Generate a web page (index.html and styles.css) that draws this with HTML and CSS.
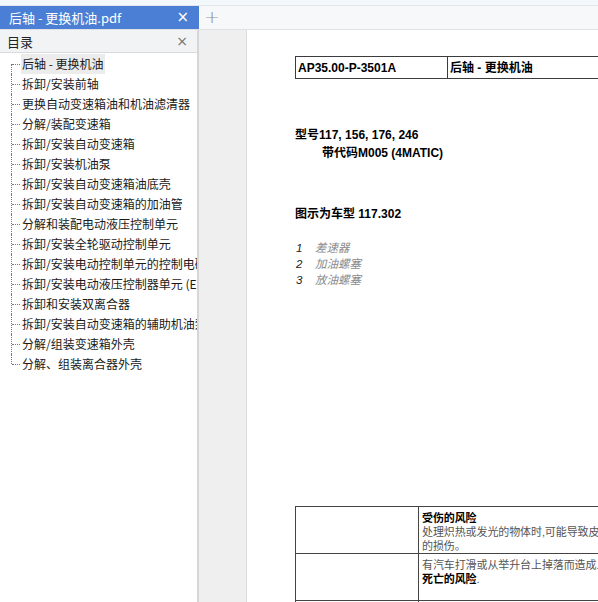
FILE: index.html
```html
<!DOCTYPE html>
<html lang="zh-CN">
<head>
    <meta charset="UTF-8">
    <title>后轴 - 更换机油.pdf</title>
    <link rel="stylesheet" href="styles.css">
</head>
<body>
<div class="topstrip"></div>
<div class="tabbar">
    <div class="tab active">
        <span class="tab-title">后轴 - 更换机油.pdf</span>
        <span class="tab-close">&times;</span>
    </div>
    <div class="tab-add">+</div>
</div>
<div class="main">
    <div class="sidebar">
        <div class="side-head">
            <span>目录</span>
            <span class="side-close">&times;</span>
        </div>
        <ul class="toc">
            <li><span class="cur">后轴 - 更换机油</span></li>
            <li><span>拆卸/安装前轴</span></li>
            <li><span>更换自动变速箱油和机油滤清器</span></li>
            <li><span>分解/装配变速箱</span></li>
            <li><span>拆卸/安装自动变速箱</span></li>
            <li><span>拆卸/安装机油泵</span></li>
            <li><span>拆卸/安装自动变速箱油底壳</span></li>
            <li><span>拆卸/安装自动变速箱的加油管</span></li>
            <li><span>分解和装配电动液压控制单元</span></li>
            <li><span>拆卸/安装全轮驱动控制单元</span></li>
            <li><span>拆卸/安装电动控制单元的控制电磁阀</span></li>
            <li><span>拆卸/安装电动液压控制器单元 (EHS)</span></li>
            <li><span>拆卸和安装双离合器</span></li>
            <li><span>拆卸/安装自动变速箱的辅助机油泵</span></li>
            <li><span>分解/组装变速箱外壳</span></li>
            <li><span>分解、组装离合器外壳</span></li>
        </ul>
    </div>
    <div class="gutter"></div>
    <div class="page">
        <table class="doc-head">
            <tr>
                <td class="code">AP35.00-P-3501A</td>
                <td>后轴 - 更换机油</td>
            </tr>
        </table>

        <div class="models">
            <p>型号117, 156, 176, 246</p>
            <p class="indent">带代码M005 (4MATIC)</p>
        </div>

        <p class="figure">图示为车型 117.302</p>

        <ol class="legend">
            <li><i>1</i><span>差速器</span></li>
            <li><i>2</i><span>加油螺塞</span></li>
            <li><i>3</i><span>放油螺塞</span></li>
        </ol>

        <table class="warn">
            <tr>
                <td class="icon"></td>
                <td>
                    <b>受伤的风险</b><br>
                    处理炽热或发光的物体时,可能导致皮肤和眼睛<br>
                    的损伤。
                </td>
            </tr>
            <tr>
                <td class="icon"></td>
                <td>
                    有汽车打滑或从举升台上掉落而造成人员受伤或<br>
                    <b>死亡的风险</b>.
                </td>
            </tr>
            <tr>
                <td class="icon"></td>
                <td></td>
            </tr>
        </table>
    </div>
</div>
</body>
</html>
```

FILE: styles.css
```css
* {
    margin: 0;
    padding: 0;
    box-sizing: border-box;
}

body {
    width: 598px;
    height: 602px;
    overflow: hidden;
    font-family: "Microsoft YaHei", "Noto Sans CJK SC", "Noto Sans", sans-serif;
    color: #222;
    background: #fff;
}

.topstrip {
    height: 6px;
    background: #f3f8fd;
    border-bottom: 1px solid #e2e5e9;
}

.tabbar {
    height: 24px;
    display: flex;
    background: #f7f8fa;
    border-bottom: 1px solid #dfe1e4;
}

.tab {
    width: 199px;
    display: flex;
    align-items: center;
    justify-content: space-between;
    padding: 0 10px 0 9px;
}

.tab.active {
    background: #4a7fd5;
    color: #fff;
}

.tab-title {
    font-size: 13px;
    line-height: 23px;
}

.tab-close {
    font-family: "DejaVu Sans", sans-serif;
    font-size: 15px;
    line-height: 23px;
}

.tab-add {
    width: 26px;
    text-align: center;
    font-family: "DejaVu Sans", sans-serif;
    font-weight: 200;
    font-size: 18px;
    line-height: 22px;
    color: #8a8d92;
}

.main {
    display: flex;
    height: 572px;
}

.sidebar {
    width: 199px;
    border-right: 2px solid #d6d6d6;
    background: #fff;
}

.side-head {
    height: 23px;
    display: flex;
    align-items: center;
    justify-content: space-between;
    padding: 0 9px 0 7px;
    background: #f2f3f5;
    border-bottom: 1px solid #d9dadc;
    font-size: 13px;
    color: #222;
}

.side-close {
    font-family: "DejaVu Sans", sans-serif;
    font-size: 14px;
    color: #707378;
}

.toc {
    list-style: none;
    padding-top: 1px;
    white-space: nowrap;
    overflow: hidden;
}

/* 目录树：竖向虚线 + 每项的横向虚线 */
.toc li {
    position: relative;
    height: 20px;
    padding-left: 21px;
    font-size: 12px;
    line-height: 20px;
    color: #1a1a1a;
}

.toc li::before {
    content: "";
    position: absolute;
    left: 11px;
    top: 0;
    bottom: 0;
    border-left: 1px dotted #777;
}

.toc li:first-child::before {
    top: 10px;
}

.toc li:last-child::before {
    bottom: 10px;
}

.toc li::after {
    content: "";
    position: absolute;
    left: 12px;
    top: 10px;
    width: 8px;
    border-top: 1px dotted #777;
}

.toc li span {
    display: inline-block;
    padding: 0 1px;
}

.toc li .cur {
    background: #ececec;
}

.gutter {
    width: 48px;
    background: #efefef;
    border-right: 1px solid #dcdcdc;
}

.page {
    flex: 1;
    overflow: hidden;
    padding: 26px 0 0 48px;
    font-family: "Liberation Sans", Arial, "Noto Sans CJK SC", sans-serif;
    font-size: 12px;
    color: #000;
}

table {
    border-collapse: collapse;
    width: 420px;
}

.doc-head td {
    height: 22px;
    border: 1px solid #3c3c3c;
    font-weight: bold;
    padding: 1px 2px 0;
    line-height: 18px;
    vertical-align: middle;
}

.doc-head .code {
    width: 152px;
}

.models {
    margin-top: 47px;
    font-weight: bold;
    line-height: 18px;
}

.models .indent {
    padding-left: 27px;
}

.figure {
    margin-top: 43px;
    font-weight: bold;
    line-height: 18px;
}

.legend {
    list-style: none;
    margin-top: 17px;
    line-height: 16px;
    font-size: 11.5px;
}

.legend li {
    display: flex;
}

.legend i {
    width: 20px;
    padding-left: 1px;
    color: #222;
}

.legend span {
    font-style: italic;
    color: #8a8a8a;
}

.warn {
    margin-top: 218px;
    font-size: 11px;
    line-height: 14px;
    letter-spacing: -0.1px;
    color: #555;
}

.warn td {
    border: 1px solid #444;
    vertical-align: top;
    padding: 4px 2px 0 3px;
    height: 47px;
}

.warn .icon {
    width: 123px;
}

.warn b {
    color: #000;
}
```
